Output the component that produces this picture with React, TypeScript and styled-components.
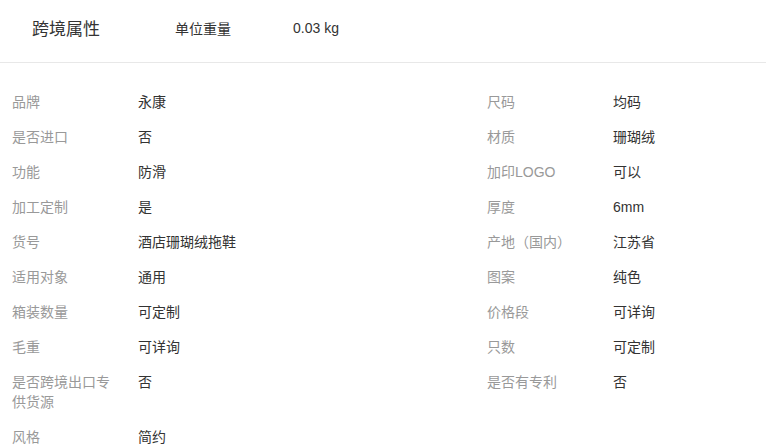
import React from 'react'
import styled, { createGlobalStyle } from 'styled-components'

const GlobalStyle = createGlobalStyle`
  body {
    margin: 0;
    background: #fff;
    font-family: "Liberation Sans", "Noto Sans CJK SC", sans-serif;
  }
`

const leftAttrs = [
  ['品牌', '永康'],
  ['是否进口', '否'],
  ['功能', '防滑'],
  ['加工定制', '是'],
  ['货号', '酒店珊瑚绒拖鞋'],
  ['适用对象', '通用'],
  ['箱装数量', '可定制'],
  ['毛重', '可详询'],
  ['是否跨境出口专供货源', '否'],
  ['风格', '简约'],
]

const rightAttrs = [
  ['尺码', '均码'],
  ['材质', '珊瑚绒'],
  ['加印LOGO', '可以'],
  ['厚度', '6mm'],
  ['产地（国内）', '江苏省'],
  ['图案', '纯色'],
  ['价格段', '可详询'],
  ['只数', '可定制'],
  ['是否有专利', '否'],
]

const App: React.FC = () => {
  // interleave into rows of two so tall cells push both sides down
  const rows = leftAttrs.map((l, i) => [l, rightAttrs[i]])

  return (
    <>
      <GlobalStyle />
      <StyledPage>
        <StyledHeader>
          <StyledTitle>跨境属性</StyledTitle>
          <StyledHeaderLabel>单位重量</StyledHeaderLabel>
          <StyledHeaderValue>0.03 kg</StyledHeaderValue>
        </StyledHeader>
        <StyledList>
          {rows.map((pair, i) => (
            <React.Fragment key={i}>
              {pair.map((attr, j) => (
                <StyledItem key={j}>
                  {attr && (
                    <>
                      <StyledLabel>{attr[0]}</StyledLabel>
                      <StyledValue>{attr[1]}</StyledValue>
                    </>
                  )}
                </StyledItem>
              ))}
            </React.Fragment>
          ))}
        </StyledList>
      </StyledPage>
    </>
  )
}

const StyledPage = styled.div`
  width: 766px;
  height: 445px;
  overflow: hidden;
`

const StyledHeader = styled.div`
  display: flex;
  align-items: center;
  height: 63px;
  padding: 0 0 7px 32px;
  border-bottom: 1px solid #e8e8e8;
  box-sizing: border-box;
`

const StyledTitle = styled.div`
  width: 143px;
  font-size: 17px;
  color: #333;
`

const StyledHeaderLabel = styled.div`
  width: 118px;
  font-size: 14px;
  color: #333;
`

const StyledHeaderValue = styled.div`
  font-size: 14px;
  color: #333;
`

const StyledList = styled.div`
  display: grid;
  grid-template-columns: 475px 1fr;
  padding: 29px 0 0 12px;
`

const StyledItem = styled.div`
  display: flex;
  margin-bottom: 15px;
  font-size: 14px;
  line-height: 20px;
`

const StyledLabel = styled.div`
  width: 106px;
  padding-right: 20px;
  flex-shrink: 0;
  color: #999;
`

const StyledValue = styled.div`
  color: #333;
`

export default App
